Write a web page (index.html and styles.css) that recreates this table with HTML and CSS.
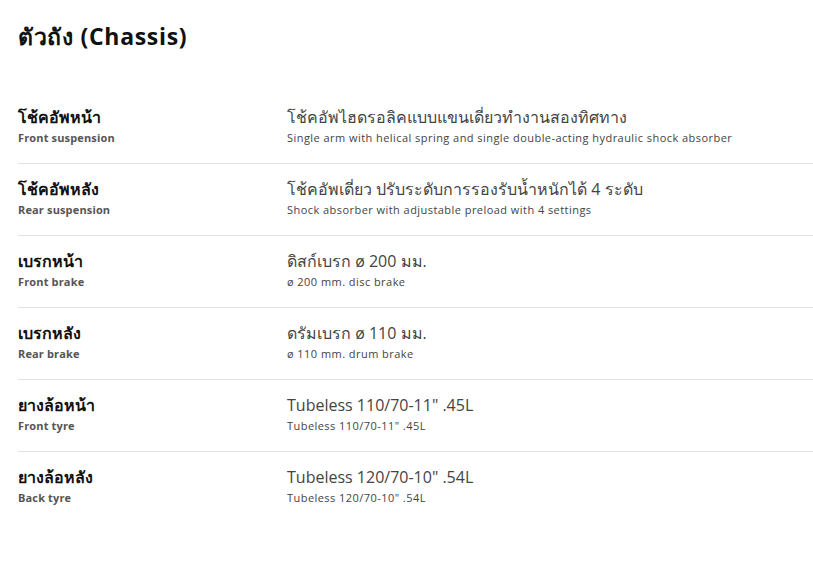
FILE: index.html
```html
<!DOCTYPE html>
<html lang="th">
<head>
<meta charset="utf-8">
<title>ตัวถัง (Chassis)</title>
<link rel="stylesheet" href="styles.css">
</head>
<body>
<main class="spec">
  <h1 class="spec-title">ตัวถัง (Chassis)</h1>
  <div class="spec-list">
    <div class="spec-row">
      <div class="spec-label"><div class="th">โช้คอัพหน้า</div><div class="en">Front suspension</div></div>
      <div class="spec-value"><div class="th">โช้คอัพไฮดรอลิคแบบแขนเดี่ยวทำงานสองทิศทาง</div><div class="en">Single arm with helical spring and single double-acting hydraulic shock absorber</div></div>
    </div>
    <div class="spec-row">
      <div class="spec-label"><div class="th">โช้คอัพหลัง</div><div class="en">Rear suspension</div></div>
      <div class="spec-value"><div class="th">โช้คอัพเดี่ยว ปรับระดับการรองรับน้ำหนักได้ 4 ระดับ</div><div class="en">Shock absorber with adjustable preload with 4 settings</div></div>
    </div>
    <div class="spec-row">
      <div class="spec-label"><div class="th">เบรกหน้า</div><div class="en">Front brake</div></div>
      <div class="spec-value"><div class="th">ดิสก์เบรก ø 200 มม.</div><div class="en">ø 200 mm. disc brake</div></div>
    </div>
    <div class="spec-row">
      <div class="spec-label"><div class="th">เบรกหลัง</div><div class="en">Rear brake</div></div>
      <div class="spec-value"><div class="th">ดรัมเบรก ø 110 มม.</div><div class="en">ø 110 mm. drum brake</div></div>
    </div>
    <div class="spec-row">
      <div class="spec-label"><div class="th">ยางล้อหน้า</div><div class="en">Front tyre</div></div>
      <div class="spec-value"><div class="th">Tubeless 110/70-11" .45L</div><div class="en">Tubeless 110/70-11" .45L</div></div>
    </div>
    <div class="spec-row">
      <div class="spec-label"><div class="th">ยางล้อหลัง</div><div class="en">Back tyre</div></div>
      <div class="spec-value"><div class="th">Tubeless 120/70-10" .54L</div><div class="en">Tubeless 120/70-10" .54L</div></div>
    </div>
  </div>
</main>
</body>
</html>
```
FILE: styles.css
```css
html, body {
  margin: 0;
  padding: 0;
  background: #fff;
}
body {
  font-family: "Open Sans", "Noto Sans", sans-serif;
  color: #111;
}
.spec {
  padding: 21px 0 0 18px;
}
.spec-title {
  margin: 0;
  font-size: 23px;
  line-height: 30px;
  font-weight: 700;
  letter-spacing: 0.7px;
  color: #111;
}
.spec-list {
  margin-top: 41px;
}
.spec-row {
  display: grid;
  grid-template-columns: 269px 1fr;
  padding: 14px 0 17px;
  border-bottom: 1px solid #e0e0e0;
}
.spec-row:last-child {
  border-bottom: none;
}
.spec-label .th,
.spec-value .th {
  font-size: 16px;
  line-height: 22px;
}
.spec-label .en,
.spec-value .en {
  font-size: 11px;
  line-height: 16px;
  margin-top: 2px;
}
.spec-label .th {
  font-weight: 700;
  color: #111;
}
.spec-label .en {
  font-weight: 700;
  color: #555;
  letter-spacing: 0.15px;
}
.spec-value .th {
  font-weight: 400;
  color: #444;
}
.spec-value .en {
  color: #444;
  letter-spacing: 0.45px;
}
```
